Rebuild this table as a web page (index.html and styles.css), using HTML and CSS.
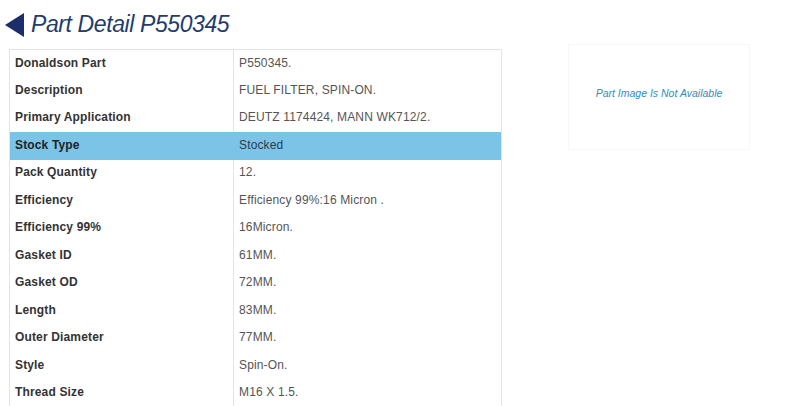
FILE: index.html
```html
<!DOCTYPE html>
<html lang="en">
<head>
    <meta charset="UTF-8">
    <title>Part Detail P550345</title>
    <link rel="stylesheet" href="styles.css">
</head>
<body>

<div class="page-title">
    <svg class="back-arrow" width="20" height="24" viewBox="0 0 20 24"><polygon points="19,0 19,24 0,12" fill="#1b2d6b"/></svg>
    <h1>Part Detail P550345</h1>
</div>

<div class="detail-area">
    <table class="part-table">
        <tr><th>Donaldson Part</th><td>P550345.</td></tr>
        <tr><th>Description</th><td>FUEL FILTER, SPIN-ON.</td></tr>
        <tr><th>Primary Application</th><td>DEUTZ 1174424, MANN WK712/2.</td></tr>
        <tr class="selected"><th>Stock Type</th><td>Stocked</td></tr>
        <tr><th>Pack Quantity</th><td>12.</td></tr>
        <tr><th>Efficiency</th><td>Efficiency 99%:16 Micron .</td></tr>
        <tr><th>Efficiency 99%</th><td>16Micron.</td></tr>
        <tr><th>Gasket ID</th><td>61MM.</td></tr>
        <tr><th>Gasket OD</th><td>72MM.</td></tr>
        <tr><th>Length</th><td>83MM.</td></tr>
        <tr><th>Outer Diameter</th><td>77MM.</td></tr>
        <tr><th>Style</th><td>Spin-On.</td></tr>
        <tr><th>Thread Size</th><td>M16 X 1.5.</td></tr>
    </table>

    <div class="part-image">Part Image Is Not Available</div>
</div>

</body>
</html>
```

FILE: styles.css
```css
body {
    margin: 0;
    font-family: "Liberation Sans", Arial, sans-serif;
    background: #fff;
    overflow: hidden;
}
.page-title {
    display: flex;
    align-items: center;
    height: 44px;
    padding-left: 5px;
    box-sizing: border-box;
    padding-top: 5px;
}
.back-arrow {
    margin-top: 0;
    margin-right: 6px;
}
.page-title h1 {
    margin: 0;
    font-size: 23px;
    font-weight: normal;
    font-style: italic;
    color: #1f3c6e;
    letter-spacing: -0.4px;
}
.detail-area {
    display: flex;
    align-items: flex-start;
}
.part-table {
    margin-top: 5px;
    margin-left: 9px;
    width: 493px;
    border-collapse: collapse;
    border: 1px solid #e4e4e4;
    font-size: 12px;
    letter-spacing: 0.15px;
}
.part-table th,
.part-table td {
    height: 27.5px;
    padding: 0 5px 2px;
    text-align: left;
    box-sizing: border-box;
}
.part-table th {
    width: 224px;
    font-weight: bold;
    color: #333;
    border-right: 1px solid #e4e4e4;
}
.part-table td {
    color: #555;
}
.part-table tr.selected th,
.part-table tr.selected td {
    background: #7cc3e8;
    color: #2b3b4a;
    border-right-color: #7cc3e8;
}
.part-table tr.selected th {
    color: #222;
}
.part-image {
    margin-left: 66px;
    width: 182px;
    height: 106px;
    border: 1px solid #f7f7f7;
    display: flex;
    align-items: center;
    justify-content: center;
    font-size: 10.5px;
    font-style: italic;
    color: #2a8fc2;
    padding-bottom: 8px;
    box-sizing: border-box;
}
```
